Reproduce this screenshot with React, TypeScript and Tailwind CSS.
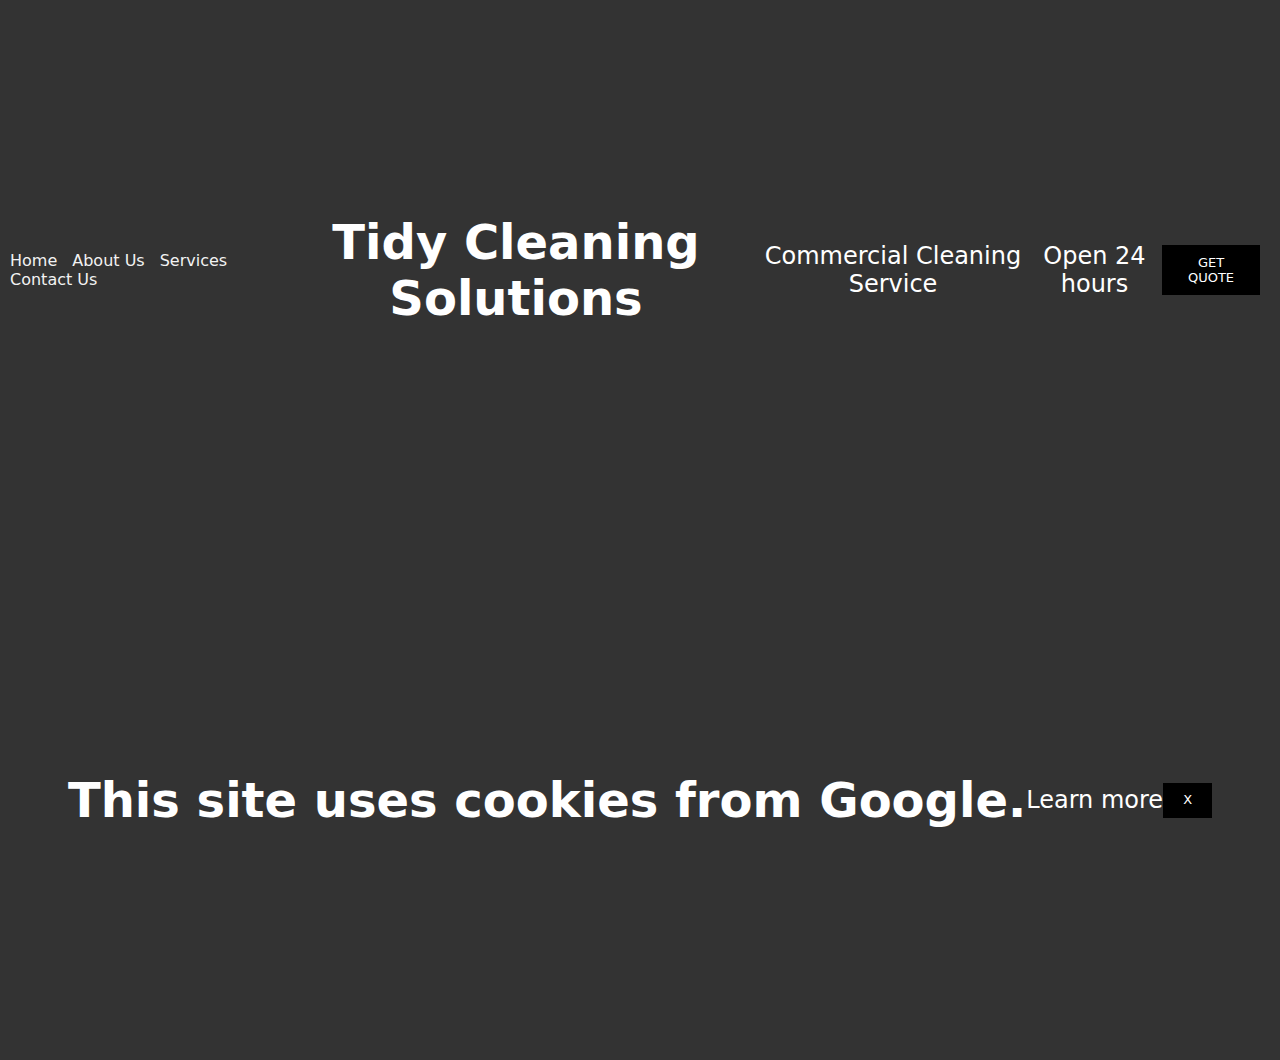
const App = () => {
  return (
    <div className="min-h-[1060px] bg-[#333333] text-white font-['DejaVu_Sans',sans-serif]">
      {/* Header */}
      <header className="flex items-center pt-[214px] pl-[10px] pr-[20px]">
        <nav className="w-[258px] flex flex-wrap gap-x-[15px] text-[16px] leading-[19px] text-[#f2f2f2]">
          <a href="#">Home</a>
          <a href="#">About Us</a>
          <a href="#">Services</a>
          <a href="#">Contact Us</a>
        </nav>

        <h1 className="w-[496px] text-center text-[48px] leading-[56px] font-bold">
          Tidy Cleaning Solutions
        </h1>

        <div className="w-[258px] text-center text-[24px] leading-[28px]">Commercial Cleaning Service</div>

        <div className="ml-[5px] w-[135px] text-center text-[24px] leading-[28px]">Open 24 hours</div>

        <a
          href="#"
          className="w-[98px] h-[50px] px-[16px] bg-black flex items-center justify-center text-center text-[13px] leading-[15px] uppercase"
        >
          Get Quote
        </a>
      </header>

      {/* Cookie notice */}
      <div className="mt-[446px] flex items-center justify-center">
        <p className="text-[48px] leading-[56px] font-bold">This site uses cookies from Google.</p>
        <a href="#" className="text-[24px] leading-[28px]">Learn more</a>
        <button className="w-[49px] h-[35px] bg-black text-white text-[13px]">X</button>
      </div>
    </div>
  )
}

export default App
